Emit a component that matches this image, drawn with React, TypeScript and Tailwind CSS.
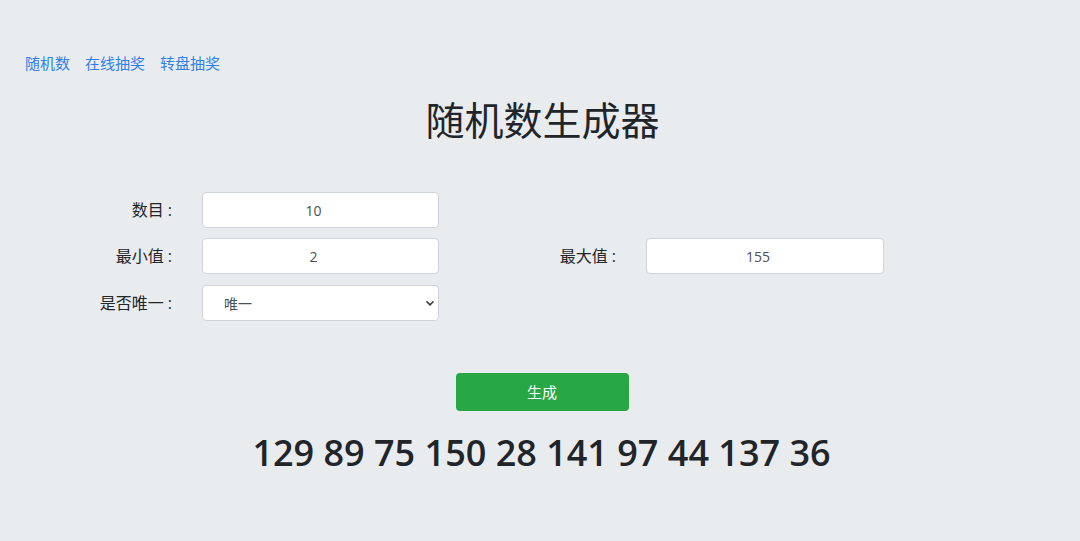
import { useState } from "react";

const font = "font-['Open_Sans','Noto_Sans_CJK_SC',sans-serif]";

const inputCls =
  "h-[36px] w-[237px] rounded-[4px] border border-[#ced4da] bg-white text-center text-[14px] text-[#495057] pr-[14px] outline-none";

export default function App() {
  const [count, setCount] = useState("10");
  const [min, setMin] = useState("2");
  const [max, setMax] = useState("155");
  const [unique, setUnique] = useState("1");
  const [result] = useState("129 89 75 150 28 141 97 44 137 36");

  return (
    <div className={`min-h-screen bg-[#e9ecef] text-[#212529] ${font}`}>
      <nav className="flex gap-[15px] pl-[25px] pt-[52px] text-[15px] leading-[22px] text-[#2f80ed]">
        <a href="#">随机数</a>
        <a href="#">在线抽奖</a>
        <a href="#">转盘抽奖</a>
      </nav>

      <h1 className="mt-[22px] pl-[5px] text-center text-[39px] font-normal leading-[48px]">
        随机数生成器
      </h1>

      <div className="mt-[48px] flex flex-col gap-[10px] text-[16px]">
        <div className="flex items-center">
          <label className="w-[187px] pr-[15px] text-right">数目 :</label>
          <input className={`${inputCls} ml-[15px]`} value={count} onChange={(e) => setCount(e.target.value)} />
        </div>
        <div className="flex items-center">
          <label className="w-[187px] pr-[15px] text-right">最小值 :</label>
          <input className={`${inputCls} ml-[15px]`} value={min} onChange={(e) => setMin(e.target.value)} />
          <label className="w-[192px] pr-[15px] text-right">最大值 :</label>
          <input className={`${inputCls} ml-[15px] w-[238px]`} value={max} onChange={(e) => setMax(e.target.value)} />
        </div>
        <div className="mt-[1px] flex items-center">
          <label className="w-[187px] pr-[15px] text-right">是否唯一 :</label>
          <div className="relative ml-[15px]">
            <select
              className="h-[36px] w-[237px] appearance-none rounded-[4px] border border-[#ced4da] bg-white pl-[21px] text-[14px] text-[#495057] outline-none"
              value={unique}
              onChange={(e) => setUnique(e.target.value)}
            >
              <option value="1">唯一</option>
              <option value="0">不唯一</option>
            </select>
            <svg
              className="pointer-events-none absolute right-[4px] top-[13px]"
              width="10"
              height="10"
              viewBox="0 0 16 16"
              fill="none"
              stroke="#343a40"
              strokeWidth="2.5"
              strokeLinecap="round"
              strokeLinejoin="round"
            >
              <path d="M3 6l5 5 5-5" />
            </svg>
          </div>
        </div>
      </div>

      <div className="mt-[52px] flex justify-center pl-[4px]">
        <button className="h-[38px] w-[173px] rounded-[4px] bg-[#28a745] text-[15px] text-white">
          生成
        </button>
      </div>

      <div className="mt-[18px] pl-[3px] text-center text-[36px] font-semibold leading-[48px]">
        {result}
      </div>
    </div>
  );
}
